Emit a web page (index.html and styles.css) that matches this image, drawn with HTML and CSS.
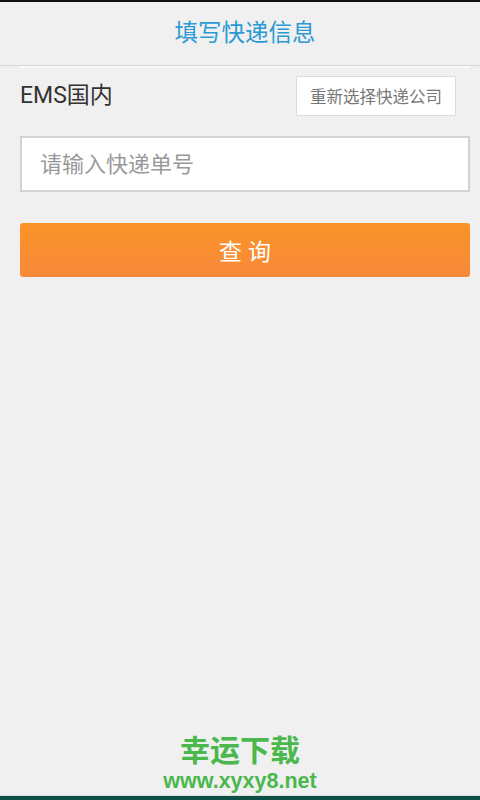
FILE: index.html
```html
<!DOCTYPE html>
<html lang="zh-CN">
<head>
  <meta charset="UTF-8" />
  <meta name="viewport" content="width=device-width, initial-scale=1.0"/>
  <title>填写快递信息</title>
  <link rel="stylesheet" href="styles.css">
</head>
<body>
  <div class="app">
    <div class="header">填写快递信息</div>

    <div class="content">
      <div class="company-row">
        <span class="company">EMS国内</span>
        <button class="reselect">重新选择快递公司</button>
      </div>

      <input class="number" type="text" placeholder="请输入快递单号" />

      <button class="query">查询</button>
    </div>

    <div class="watermark">
      <div class="wm-name">幸运下载</div>
      <div class="wm-url">www.xyxy8.net</div>
    </div>
    <div class="navbar"></div>
  </div>
</body>
</html>
```

FILE: styles.css
```css
* { box-sizing: border-box; }

html, body {
  margin: 0;
  height: 100%;
}

body {
  font-family: Roboto, "Noto Sans CJK SC", sans-serif;
  background: #f0f0f0;
  color: #333;
}

.app {
  height: 800px;
  display: flex;
  flex-direction: column;
  border-top: 2px solid #111;
}

.header {
  height: 64px;
  display: flex;
  align-items: center;
  justify-content: center;
  font-size: 23.5px;
  color: #2b9ad3;
  border-bottom: 1px solid #d8d8d8;
  padding: 0 0 6px 10px;
}

.content {
  flex: 1;
  margin: 0 10px 0 20px;
  border-top: 2px solid #fafafa;
}

.company-row {
  display: flex;
  align-items: center;
  justify-content: space-between;
  padding: 8px 14px 0 0;
}

.company {
  font-size: 23px;
  color: #333;
  margin-top: -7px;
}

.reselect {
  width: 160px;
  height: 40px;
  background: #fff;
  border: 1px solid #dcdcdc;
  border-radius: 2px;
  font-family: inherit;
  font-size: 16.5px;
  color: #777;
  padding: 0;
}

.number {
  display: block;
  width: 100%;
  height: 56px;
  margin-top: 20px;
  border: 2px solid #d2d2d2;
  background: #fff;
  padding: 0 18px;
  font-family: inherit;
  font-size: 22px;
  color: #333;
  outline: none;
}

.number::placeholder {
  color: #999;
}

.query {
  display: block;
  width: 100%;
  height: 54px;
  margin-top: 31px;
  border: none;
  border-radius: 3px;
  background: linear-gradient(#fa9326, #f7893a);
  color: #fff;
  font-family: inherit;
  font-size: 23px;
  letter-spacing: 6px;
  padding: 0 0 0 6px;
}

.watermark {
  text-align: center;
  color: #4ab84c;
  font-weight: bold;
  padding-bottom: 1px;
}

.wm-name {
  font-size: 30px;
  line-height: 36px;
}

.wm-url {
  font-family: "Liberation Sans", Arial, sans-serif;
  font-size: 21.5px;
  line-height: 25px;
}

.navbar {
  height: 5px;
  border-top: 1px solid #dcdcdc;
  background: #0d4f45;
}
```
